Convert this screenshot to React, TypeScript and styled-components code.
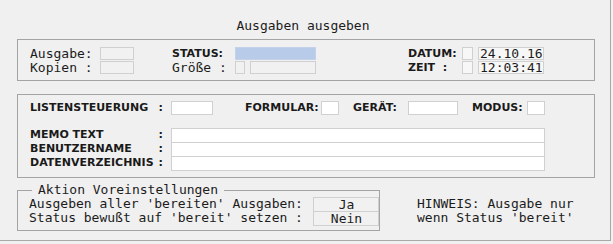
import React from "react";
import styled, { createGlobalStyle } from "styled-components";

const Global = createGlobalStyle`
  html, body { margin: 0; padding: 0; background: #f0f0f0; }
  * { box-sizing: border-box; }
`;

const MONO = `"DejaVu Sans Mono", "Liberation Mono", monospace`;
const SANS = `"DejaVu Sans", Verdana, sans-serif`;

const Window = styled.div`
  width: 611px;
  height: 241px;
  background: #f0f0f0;
  border-right: 1px solid #a8a8a8;
  border-bottom: 1px solid #a8a8a8;
  padding-left: 17px;
  display: flex;
  flex-direction: column;
  color: #1c1c1c;
  font-family: ${MONO};
  font-size: 13px;
`;

const Title = styled.div`
  width: 578px;
  height: 39px;
  padding-top: 18px;
  padding-right: 6px;
  line-height: 15px;
  text-align: center;
  font-family: ${MONO};
  font-size: 13px;
`;

const Panel = styled.div<{ $h: number; $pt: number; $pb: number; $mt?: number }>`
  width: 578px;
  height: ${(p) => p.$h}px;
  margin-top: ${(p) => p.$mt ?? 0}px;
  border: 1px solid #a4a4a4;
  padding: ${(p) => p.$pt}px 0 ${(p) => p.$pb}px 12px;
  display: flex;
  flex-direction: column;
`;

const Row = styled.div<{ $mt?: number }>`
  display: flex;
  align-items: flex-start;
  margin-top: ${(p) => p.$mt ?? 0}px;
`;

const Group = styled.div<{ $cols: string; $ml?: number }>`
  display: grid;
  grid-template-columns: ${(p) => p.$cols};
  grid-auto-rows: 14px;
  align-items: start;
  margin-left: ${(p) => p.$ml ?? 0}px;
`;

const MonoLabel = styled.span`
  font-family: ${MONO};
  font-size: 13px;
  line-height: 14px;
  white-space: pre;
`;

const BoldLabel = styled.span<{ $w?: number; $ml?: number }>`
  font-family: ${SANS};
  font-weight: bold;
  font-size: 11px;
  line-height: 14px;
  white-space: pre;
  width: ${(p) => (p.$w ? `${p.$w}px` : "auto")};
  margin-left: ${(p) => p.$ml ?? 0}px;
  flex-shrink: 0;
  color: #1a1a1a;
`;

const LabelCell = styled.div`
  display: flex;
  justify-content: space-between;
  padding-right: 8px;
  font-family: ${SANS};
  font-weight: bold;
  font-size: 11px;
  line-height: 14px;
  white-space: pre;
  color: #1a1a1a;
`;

type Tone = "plain" | "white" | "blue" | "light";

const fills: Record<Tone, string> = {
  plain: "#f1f1f1",
  white: "#ffffff",
  blue: "#b8cbe8",
  light: "#f7f7f7",
};

const Field = styled.div<{ $w: number; $h?: number; $tone?: Tone; $stack?: boolean; $center?: boolean }>`
  width: ${(p) => p.$w}px;
  height: ${(p) => p.$h ?? 13}px;
  margin-bottom: ${(p) => (p.$stack ? -1 : 0)}px;
  background: ${(p) => fills[p.$tone ?? "plain"]};
  border: 1px solid ${(p) => (p.$tone === "blue" ? "#c3d2e8" : "#d0d0d0")};
  font-family: ${MONO};
  font-size: 13px;
  line-height: ${(p) => (p.$h ?? 13) - 2}px;
  padding-left: 1px;
  text-align: ${(p) => (p.$center ? "center" : "left")};
  color: #1c1c1c;
  flex-shrink: 0;
`;

const Pair = styled.div`
  display: flex;
  gap: 5px;
`;

const Bottom = styled.div`
  display: flex;
  align-items: flex-start;
  margin-top: 5px;
`;

const Fieldset = styled.fieldset`
  width: 363px;
  margin: 0;
  padding: 0 0 5px 11px;
  border: 1px solid #a4a4a4;
  min-width: 0;
`;

const Legend = styled.legend`
  margin-left: 3px;
  padding: 0 6px;
  font-family: ${MONO};
  font-size: 13px;
  line-height: 14px;
`;

const Hint = styled.div`
  margin-left: 37px;
  padding-top: 14px;
  font-family: ${MONO};
  font-size: 13px;
  line-height: 14px;
  white-space: pre;
`;

export default function App() {
  return (
    <>
      <Global />
      <Window>
        <Title>Ausgaben ausgeben</Title>

        <Panel $h={42} $pt={7} $pb={5}>
          <Row>
            <Group $cols="70px 34px">
              <MonoLabel>Ausgabe:</MonoLabel>
              <Field $w={34} />
              <MonoLabel>Kopien :</MonoLabel>
              <Field $w={34} />
            </Group>
            <Group $cols="63px 81px" $ml={38}>
              <BoldLabel>STATUS:</BoldLabel>
              <Field $w={81} $tone="blue" />
              <MonoLabel>Größe :</MonoLabel>
              <Pair>
                <Field $w={10} />
                <Field $w={66} />
              </Pair>
            </Group>
            <Group $cols="54px 82px" $ml={92}>
              <BoldLabel>DATUM:</BoldLabel>
              <Pair>
                <Field $w={11} $tone="light" />
                <Field $w={66} $tone="light">24.10.16</Field>
              </Pair>
              <BoldLabel>ZEIT  :</BoldLabel>
              <Pair>
                <Field $w={11} $tone="light" />
                <Field $w={66} $tone="light">12:03:41</Field>
              </Pair>
            </Group>
          </Row>
        </Panel>

        <Panel $h={84} $pt={6} $pb={7} $mt={13}>
          <Row>
            <LabelCell style={{ width: 141 }}>
              <span>LISTENSTEUERUNG</span>
              <span>:</span>
            </LabelCell>
            <Field $w={42} $h={14} $tone="white" />
            <BoldLabel $w={76} $ml={32}>FORMULAR:</BoldLabel>
            <Field $w={18} $h={14} $tone="white" />
            <BoldLabel $w={55} $ml={14}>GERÄT:</BoldLabel>
            <Field $w={50} $h={14} $tone="white" />
            <BoldLabel $w={55} $ml={14}>MODUS:</BoldLabel>
            <Field $w={18} $h={14} $tone="white" />
          </Row>
          <Row $mt={13}>
            <Group $cols="141px 374px">
              <LabelCell>
                <span>MEMO TEXT</span>
                <span>:</span>
              </LabelCell>
              <Field $w={374} $h={15} $tone="white" $stack />
              <LabelCell>
                <span>BENUTZERNAME</span>
                <span>:</span>
              </LabelCell>
              <Field $w={374} $h={15} $tone="white" $stack />
              <LabelCell>
                <span>DATENVERZEICHNIS</span>
                <span>:</span>
              </LabelCell>
              <Field $w={374} $h={15} $tone="white" $stack />
            </Group>
          </Row>
        </Panel>

        <Bottom>
          <Fieldset>
            <Legend>Aktion Voreinstellungen</Legend>
            <Group $cols="284px 66px">
              <MonoLabel>Ausgeben aller 'bereiten' Ausgaben:</MonoLabel>
              <Field $w={66} $h={15} $stack $center>Ja</Field>
              <MonoLabel>Status bewußt auf 'bereit' setzen :</MonoLabel>
              <Field $w={66} $h={15} $stack $center>Nein</Field>
            </Group>
          </Fieldset>
          <Hint>{"HINWEIS: Ausgabe nur\nwenn Status 'bereit'"}</Hint>
        </Bottom>
      </Window>
    </>
  );
}
